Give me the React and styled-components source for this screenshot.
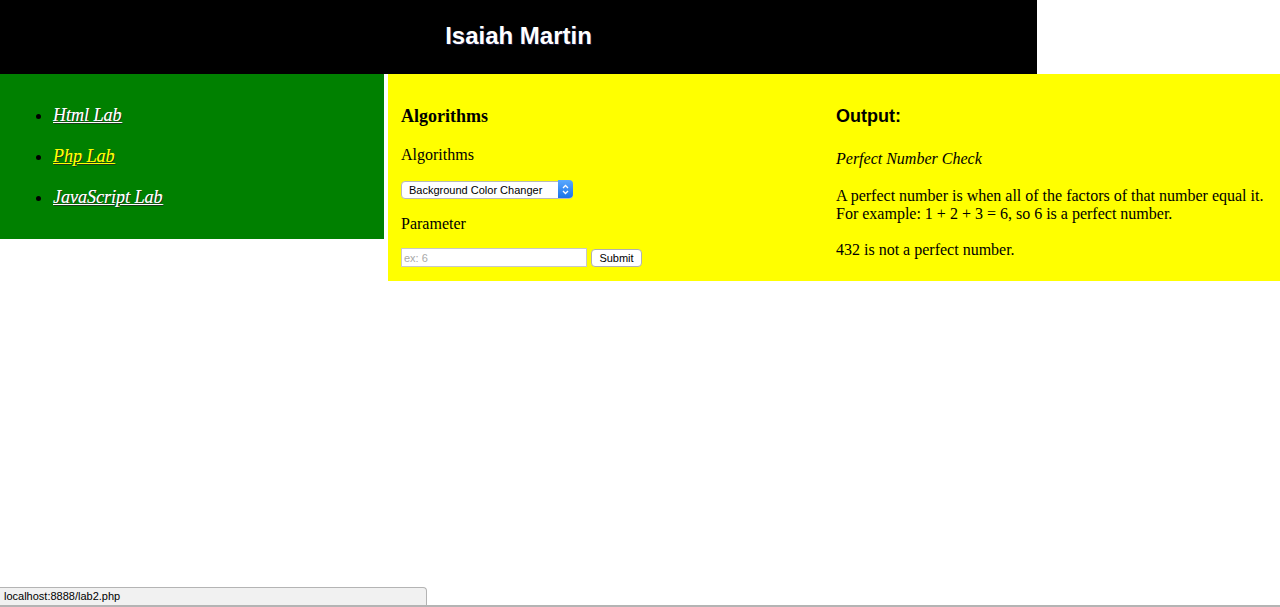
import styled, { createGlobalStyle } from "styled-components";

const GlobalStyle = createGlobalStyle`
  body {
    margin: 0;
    background: #fff;
    font-family: "Liberation Serif", "Times New Roman", serif;
    color: #000;
  }
`;

const Header = styled.header`
  width: 1037px;
  height: 74px;
  background: #000;
  display: flex;
  align-items: center;
  justify-content: center;
`;

const Title = styled.h1`
  margin: 0 0 2px;
  font-family: "Liberation Sans", Arial, sans-serif;
  font-size: 24px;
  font-weight: bold;
  color: #fff;
  text-shadow: 1px 1px 0 #1a1a40;
`;

const Body = styled.div`
  display: flex;
  align-items: flex-start;
  gap: 4px;
`;

const Sidebar = styled.nav`
  width: 384px;
  height: 165px;
  background: #008000;
  box-sizing: border-box;
  padding: 21px 0 0 13px;
`;

const NavList = styled.ul`
  margin: 0;
  padding-left: 40px;
  list-style: disc;
`;

const NavItem = styled.li`
  height: 41px;
  line-height: 41px;
  font-size: 18px;
  font-style: italic;
`;

const NavLink = styled.a`
  color: ${(p) => (p.$active ? "#ffff00" : "#fff")};
  text-decoration: underline;
  text-shadow: 1px 1px 0 #1b3b1b, 0.6px 0 0 ${(p) => (p.$active ? "#ffff00" : "#fff")};
`;

const Main = styled.main`
  flex: 1;
  background: #ffff00;
  display: grid;
  grid-template-columns: 435px 1fr;
  box-sizing: border-box;
  padding: 31px 0 14px;
`;

const Column = styled.section`
  padding-left: 13px;
  display: flex;
  flex-direction: column;
  align-items: flex-start;
`;

const Heading = styled.h3`
  margin: 0;
  font-size: 18px;
  line-height: 22px;
  font-weight: bold;
  font-family: ${(p) =>
    p.$sans ? '"Liberation Sans", Arial, sans-serif' : '"Liberation Serif", serif'};
`;

const Label = styled.p`
  margin: ${(p) => p.$top}px 0 0;
  font-size: 16px;
  line-height: 19px;
`;

const SelectWrap = styled.div`
  position: relative;
  margin-top: 16px;
  width: 172px;
  height: 18px;
`;

const Select = styled.select`
  appearance: none;
  width: 100%;
  height: 100%;
  box-sizing: border-box;
  border: 1px solid #b8b8b8;
  border-radius: 4px;
  background: #fff;
  font-family: "Liberation Sans", Arial, sans-serif;
  font-size: 11px;
  padding: 0 0 0 7px;
  color: #000;
`;

const Stepper = styled.span`
  position: absolute;
  right: 0;
  top: 0;
  width: 15px;
  height: 18px;
  border-radius: 0 4px 4px 0;
  background: linear-gradient(#5aa9ff, #1a73e8);
  display: flex;
  align-items: center;
  justify-content: center;
  pointer-events: none;
`;

const FormRow = styled.div`
  margin-top: 15px;
  display: flex;
  align-items: center;
  gap: 4px;
`;

const Input = styled.input`
  width: 186px;
  height: 19px;
  box-sizing: border-box;
  border: 1px solid #c8c8c8;
  padding: 0 2px;
  font-family: "Liberation Sans", Arial, sans-serif;
  font-size: 11px;
  background: #fff;
  &::placeholder {
    color: #a9a9a9;
  }
`;

const Button = styled.button`
  height: 18px;
  width: 51px;
  padding: 0;
  border: 1px solid #b0b0b0;
  border-radius: 4px;
  background: #fff;
  font-family: "Liberation Sans", Arial, sans-serif;
  font-size: 11px;
  color: #000;
`;

const Script = styled.p`
  margin: 22px 0 0;
  font-size: 16px;
  line-height: 19px;
  font-style: italic;
`;

const Text = styled.p`
  margin: ${(p) => p.$top}px 0 0;
  font-size: 16px;
  line-height: 18px;
`;

const StatusBar = styled.div`
  position: fixed;
  left: 0;
  bottom: 2px;
  width: 427px;
  height: 18px;
  box-sizing: border-box;
  background: #f1f1f1;
  border: 1px solid #b4b4b4;
  border-left: none;
  border-bottom: none;
  border-radius: 0 4px 0 0;
  padding-left: 4px;
  font-family: "Liberation Sans", Arial, sans-serif;
  font-size: 11px;
  line-height: 17px;
`;

const BottomEdge = styled.div`
  position: fixed;
  left: 0;
  right: 0;
  bottom: 0;
  height: 2px;
  background: #b4b4b4;
`;

export default function App() {
  return (
    <>
      <GlobalStyle />
      <Header>
        <Title>Isaiah Martin</Title>
      </Header>
      <Body>
        <Sidebar>
          <NavList>
            <NavItem>
              <NavLink href="#">Html Lab</NavLink>
            </NavItem>
            <NavItem>
              <NavLink href="#" $active>
                Php Lab
              </NavLink>
            </NavItem>
            <NavItem>
              <NavLink href="#">JavaScript Lab</NavLink>
            </NavItem>
          </NavList>
        </Sidebar>
        <Main>
          <Column>
            <Heading>Algorithms</Heading>
            <Label $top={18}>Algorithms</Label>
            <SelectWrap>
              <Select defaultValue="bg">
                <option value="bg">Background Color Changer</option>
                <option value="pn">Perfect Number Check</option>
              </Select>
              <Stepper>
                <svg width="7" height="11" viewBox="0 0 7 11" fill="none" stroke="#fff" strokeWidth="1.3">
                  <path d="M1 4 L3.5 1.5 L6 4" />
                  <path d="M1 7 L3.5 9.5 L6 7" />
                </svg>
              </Stepper>
            </SelectWrap>
            <Label $top={16}>Parameter</Label>
            <FormRow>
              <Input placeholder="ex: 6" />
              <Button>Submit</Button>
            </FormRow>
          </Column>
          <Column>
            <Heading $sans>Output:</Heading>
            <Script>Perfect Number Check</Script>
            <Text $top={19}>
              A perfect number is when all of the factors of that number equal it.
              <br />
              For example: 1 + 2 + 3 = 6, so 6 is a perfect number.
            </Text>
            <Text $top={18}>432 is not a perfect number.</Text>
          </Column>
        </Main>
      </Body>
      <StatusBar>localhost:8888/lab2.php</StatusBar>
      <BottomEdge />
    </>
  );
}
